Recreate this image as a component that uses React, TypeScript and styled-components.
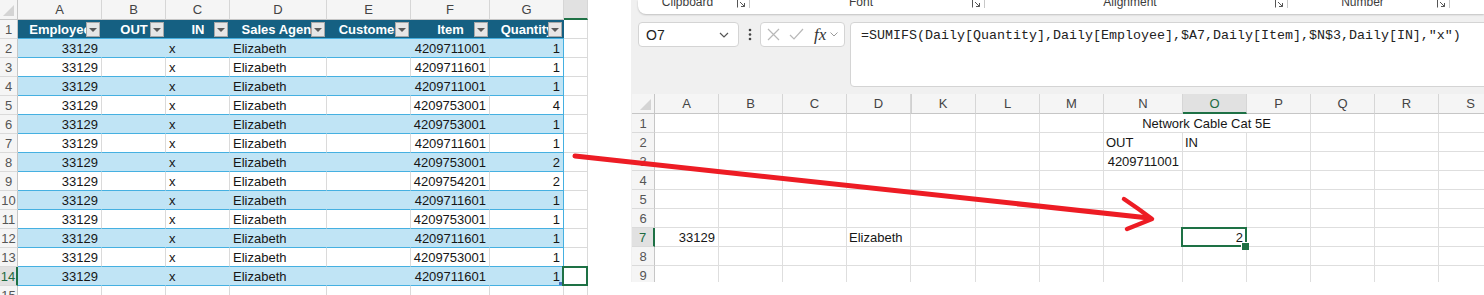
import React from "react";
import styled, { createGlobalStyle, css } from "styled-components";

const GlobalStyle = createGlobalStyle`
  html, body {
    margin: 0;
    padding: 0;
    background: #fff;
  }
  body {
    font-family: "Liberation Sans", Arial, sans-serif;
  }
  * {
    box-sizing: border-box;
  }
`;

const Page = styled.div`
  position: relative;
  display: flex;
  width: 1484px;
  height: 295px;
  overflow: hidden;
  background: #fff;
`;

/* ---------- sheet chrome shared by both sheets ---------- */

const Corner = styled.div`
  position: relative;
  background: #f5f5f5;
  border-right: 1px solid #c6c6c6;
  border-bottom: 1px solid #c6c6c6;
  &::after {
    content: "";
    position: absolute;
    right: 3px;
    bottom: 3px;
    border-left: 11px solid transparent;
    border-bottom: 11px solid #d4d4d4;
  }
`;

const ColHead = styled.div<{ $active?: boolean; $split?: boolean }>`
  display: flex;
  align-items: center;
  justify-content: center;
  font-size: 13px;
  background: ${(p) => (p.$active ? "#e1e1e1" : "#f5f5f5")};
  color: ${(p) => (p.$active ? "#1e6b41" : "#444")};
  border-right: 1px solid #d6d6d6;
  border-bottom: ${(p) => (p.$active ? "2px solid #1e7145" : "1px solid #c6c6c6")};
  ${(p) =>
    p.$split &&
    css`
      box-shadow: inset 1px 0 0 #d0d0d0;
    `}
`;

const RowHead = styled.div<{ $active?: boolean }>`
  display: flex;
  align-items: center;
  justify-content: center;
  font-size: 13px;
  background: ${(p) => (p.$active ? "#e1e1e1" : "#f5f5f5")};
  color: ${(p) => (p.$active ? "#1e6b41" : "#555")};
  border-bottom: 1px solid #dadada;
  border-right: ${(p) => (p.$active ? "2px solid #1e7145" : "1px solid #c6c6c6")};
`;

const selection = css`
  z-index: 2;
  &::before {
    content: "";
    position: absolute;
    left: -2px;
    top: -1px;
    right: -1px;
    bottom: -1px;
    border: 2px solid #1e7145;
  }
`;

/* ---------- left sheet: the Daily table ---------- */

const LeftSheet = styled.div`
  display: grid;
  grid-template-columns: 18px 84px 64px 64px 97px 84px 79px 74px 24px;
  grid-template-rows: 20px repeat(15, 19px);
  width: 588px;
  height: 295px;
  flex: none;
  overflow: hidden;
  font-size: 13px;
  color: #161616;
`;

const TableHead = styled.div`
  position: relative;
  display: flex;
  align-items: center;
  justify-content: center;
  background: #156082;
  color: #fff;
  font-weight: bold;
  white-space: nowrap;
  overflow: hidden;
  border-bottom: 1px solid #45b0e1;
`;

const FilterButton = styled.span`
  position: absolute;
  right: 2px;
  top: 2px;
  width: 14px;
  height: 15px;
  display: flex;
  align-items: center;
  justify-content: center;
  background: #e6e6e6;
  border: 1px solid #a8a8a8;
  &::after {
    content: "";
    border-left: 4px solid transparent;
    border-right: 4px solid transparent;
    border-top: 4px solid #5a5a5a;
  }
`;

const TableCell = styled.div<{ $band: boolean; $align: "left" | "right"; $edge?: boolean; $handle?: boolean }>`
  position: relative;
  display: flex;
  align-items: center;
  justify-content: ${(p) => (p.$align === "right" ? "flex-end" : "flex-start")};
  padding: 0 3px;
  white-space: nowrap;
  background: ${(p) => (p.$band ? "#c0e4f5" : "#fff")};
  border-bottom: 1px solid #45b0e1;
  border-right: 1px solid
    ${(p) => (p.$edge ? "#45b0e1" : p.$band ? "#c0e4f5" : "#dadada")};
  ${(p) =>
    p.$handle &&
    css`
      &::after {
        content: "";
        position: absolute;
        right: 0;
        bottom: 0;
        width: 4px;
        height: 3px;
        background: #4a6fc0;
      }
    `}
`;

const PlainCell = styled.div<{ $selected?: boolean }>`
  position: relative;
  border-right: 1px solid #dadada;
  border-bottom: 1px solid #dadada;
  background: #fff;
  ${(p) => p.$selected && selection}
`;

/* ---------- right panel: ribbon, formula bar, sheet ---------- */

const RightPanel = styled.div`
  margin-left: 43px;
  width: 853px;
  height: 282px;
  flex: none;
  display: flex;
  flex-direction: column;
  background: #f0f0f0;
  overflow: hidden;
`;

const Ribbon = styled.div`
  display: flex;
  flex: none;
  height: 14px;
  margin-left: 7px;
  background: #fff;
  border-bottom-left-radius: 8px;
  box-shadow: 0 1px 2px rgba(0, 0, 0, 0.2);
  overflow: hidden;
`;

const RibbonGroup = styled.div<{ $w: number }>`
  display: flex;
  align-items: flex-start;
  flex: none;
  width: ${(p) => p.$w}px;
`;

const GroupLabel = styled.span`
  flex: 1;
  margin-top: -4px;
  text-align: center;
  font-size: 12px;
  line-height: 12px;
  color: #3c3c3c;
`;

const Launcher = styled.svg`
  width: 9px;
  height: 9px;
  margin-top: -1px;
  margin-right: 3px;
  flex: none;
`;

const GroupSep = styled.span`
  width: 1px;
  height: 8px;
  background: #c8c8c8;
  flex: none;
`;

const FormulaRow = styled.div`
  display: flex;
  align-items: flex-start;
  flex: none;
  height: 65px;
  margin-top: 8px;
  padding-left: 7px;
`;

const NameBox = styled.div`
  display: flex;
  align-items: center;
  justify-content: space-between;
  width: 101px;
  height: 25px;
  padding: 0 9px 0 7px;
  background: #fff;
  border: 1px solid #d4d4d4;
  border-radius: 4px;
  font-size: 14px;
  color: #222;
`;

const Dots = styled.svg`
  width: 21px;
  height: 25px;
  flex: none;
`;

const FxBox = styled.div`
  display: flex;
  align-items: center;
  width: 85px;
  height: 25px;
  padding-left: 6px;
  gap: 9px;
  background: #fff;
  border: 1px solid #d4d4d4;
  border-radius: 4px;
`;

const FxLabel = styled.span`
  font-family: "Liberation Serif", "Times New Roman", serif;
  font-style: italic;
  font-size: 17px;
  color: #333;
  margin-left: 1px;
  margin-right: -5px;
`;

const FormulaBox = styled.div`
  flex: 1;
  height: 65px;
  margin-left: 5px;
  margin-right: -10px;
  padding: 5px 10px;
  background: #fff;
  border: 1px solid #d4d4d4;
  border-radius: 4px;
  font-family: "Liberation Mono", "DejaVu Sans Mono", monospace;
  font-size: 13.33px;
  line-height: 16px;
  color: #222;
  white-space: nowrap;
`;

const MainSheet = styled.div`
  display: grid;
  grid-template-columns: 23px 64px 64px 64px 64px 65px 64px 64px 79px 64px 64px 64px 64px 64px;
  grid-template-rows: 20px repeat(9, 19px);
  flex: none;
  margin-top: 7px;
  margin-left: 1px;
  background: #fff;
  font-size: 13px;
  color: #161616;
`;

const GridCell = styled.div<{ $align: "left" | "right" | "center"; $span: number; $selected?: boolean }>`
  position: relative;
  grid-column: span ${(p) => p.$span};
  display: flex;
  align-items: center;
  justify-content: ${(p) =>
    p.$align === "right" ? "flex-end" : p.$align === "center" ? "center" : "flex-start"};
  padding: 0 3px 0 2px;
  white-space: nowrap;
  border-right: 1px solid #dedede;
  border-bottom: 1px solid #dedede;
  ${(p) =>
    p.$selected &&
    css`
      ${selection}
      &::after {
        content: "";
        position: absolute;
        right: -3px;
        bottom: -4px;
        width: 7px;
        height: 7px;
        background: #1e7145;
        border-left: 1px solid #fff;
        border-top: 1px solid #fff;
      }
    `}
`;

const ArrowLayer = styled.svg`
  position: absolute;
  left: 0;
  top: 0;
  width: 1484px;
  height: 295px;
  pointer-events: none;
`;

/* ---------- data ---------- */

const leftCols = ["A", "B", "C", "D", "E", "F", "G", ""];
const headers = ["Employee", "OUT", "IN", "Sales Agent", "Customer", "Item", "Quantity"];
const items = [
  "4209711001", "4209711601", "4209711001", "4209753001", "4209753001", "4209711601", "4209753001",
  "4209754201", "4209711601", "4209753001", "4209711601", "4209753001", "4209711601",
];
const qty = [1, 1, 1, 4, 1, 1, 2, 2, 1, 1, 1, 1, 1];

const ribbonGroups = [
  { label: "Clipboard", width: 112 },
  { label: "Font", width: 235 },
  { label: "Alignment", width: 303 },
  { label: "Number", width: 162 },
];

type SheetCell = { text: string; align?: "left" | "right" | "center"; span?: number; selected?: boolean };

const mainCols = ["A", "B", "C", "D", "K", "L", "M", "N", "O", "P", "Q", "R", "S"];
const mainCells: Record<number, Record<string, SheetCell>> = {
  1: { N: { text: "Network Cable Cat 5E", align: "center", span: 3 } },
  2: { N: { text: "OUT" }, O: { text: "IN" } },
  3: { N: { text: "4209711001", align: "right" } },
  7: {
    A: { text: "33129", align: "right" },
    D: { text: "Elizabeth" },
    O: { text: "2", align: "right", selected: true },
  },
};

function DailyTable() {
  return (
    <LeftSheet>
      <Corner />
      {leftCols.map((c, i) => (
        <ColHead key={i} $active={c === ""}>
          {c}
        </ColHead>
      ))}
      <RowHead>1</RowHead>
      {headers.map((h) => (
        <TableHead key={h}>
          {h}
          <FilterButton />
        </TableHead>
      ))}
      <PlainCell />
      {items.map((item, i) => {
        const row = i + 2;
        const band = row % 2 === 0;
        const last = row === 14;
        return (
          <React.Fragment key={row}>
            <RowHead $active={last}>{row}</RowHead>
            <TableCell $band={band} $align="right">33129</TableCell>
            <TableCell $band={band} $align="left" />
            <TableCell $band={band} $align="left">x</TableCell>
            <TableCell $band={band} $align="left">Elizabeth</TableCell>
            <TableCell $band={band} $align="left" />
            <TableCell $band={band} $align="right">{item}</TableCell>
            <TableCell $band={band} $align="right" $edge $handle={last}>
              {qty[i]}
            </TableCell>
            <PlainCell $selected={last} />
          </React.Fragment>
        );
      })}
      <RowHead>15</RowHead>
      {leftCols.map((c, i) => (
        <PlainCell key={i} />
      ))}
    </LeftSheet>
  );
}

function MainGrid() {
  const rows = [1, 2, 3, 4, 5, 6, 7, 8, 9];
  return (
    <MainSheet>
      <Corner />
      {mainCols.map((c) => (
        <ColHead key={c} $active={c === "O"} $split={c === "K"}>
          {c}
        </ColHead>
      ))}
      {rows.map((r) => {
        const cells = mainCells[r] || {};
        const out: React.ReactNode[] = [];
        let skip = 0;
        mainCols.forEach((c) => {
          if (skip > 0) {
            skip--;
            return;
          }
          const cell = cells[c];
          const span = cell?.span ?? 1;
          skip = span - 1;
          out.push(
            <GridCell key={c} $align={cell?.align ?? "left"} $span={span} $selected={cell?.selected}>
              {cell?.text}
            </GridCell>
          );
        });
        return (
          <React.Fragment key={r}>
            <RowHead $active={r === 7}>{r}</RowHead>
            {out}
          </React.Fragment>
        );
      })}
    </MainSheet>
  );
}

function App() {
  return (
    <Page>
      <GlobalStyle />
      <DailyTable />
      <RightPanel>
        <Ribbon>
          {ribbonGroups.map((g) => (
            <RibbonGroup key={g.label} $w={g.width}>
              <GroupLabel>{g.label}</GroupLabel>
              <Launcher viewBox="0 0 9 9" fill="none" stroke="#555" strokeWidth="1">
                <path d="M0.5 8.5V0.5H8.5" />
                <path d="M3 3L7.5 7.5M7.5 4V7.5H4" />
              </Launcher>
              <GroupSep />
            </RibbonGroup>
          ))}
        </Ribbon>
        <FormulaRow>
          <NameBox>
            O7
            <svg width="10" height="6" viewBox="0 0 10 6" fill="none" stroke="#555" strokeWidth="1.2">
              <path d="M1 1L5 5L9 1" />
            </svg>
          </NameBox>
          <Dots viewBox="0 0 21 25" fill="#444">
            <circle cx="11" cy="8" r="1.3" />
            <circle cx="11" cy="12.5" r="1.3" />
            <circle cx="11" cy="17" r="1.3" />
          </Dots>
          <FxBox>
            <svg width="13" height="13" viewBox="0 0 13 13" stroke="#b8b8b8" strokeWidth="1.2">
              <path d="M1 1L12 12M12 1L1 12" />
            </svg>
            <svg width="15" height="13" viewBox="0 0 15 13" fill="none" stroke="#b8b8b8" strokeWidth="1.2">
              <path d="M1 7L5 11L14 1" />
            </svg>
            <FxLabel>fx</FxLabel>
            <svg width="8" height="5" viewBox="0 0 8 5" fill="none" stroke="#9a9a9a" strokeWidth="1">
              <path d="M0.5 0.5L4 4L7.5 0.5" />
            </svg>
          </FxBox>
          <FormulaBox>=SUMIFS(Daily[Quantity],Daily[Employee],$A7,Daily[Item],$N$3,Daily[IN],"x")</FormulaBox>
        </FormulaRow>
        <MainGrid />
      </RightPanel>
      <ArrowLayer viewBox="0 0 1484 295" fill="none" stroke="#ed1c24" strokeLinecap="round" strokeLinejoin="round">
        <path d="M575 156L1149 218" strokeWidth="5" />
        <path d="M1124 199Q1139 209 1152 219L1127 229" strokeWidth="4.5" />
      </ArrowLayer>
    </Page>
  );
}

export default App;
